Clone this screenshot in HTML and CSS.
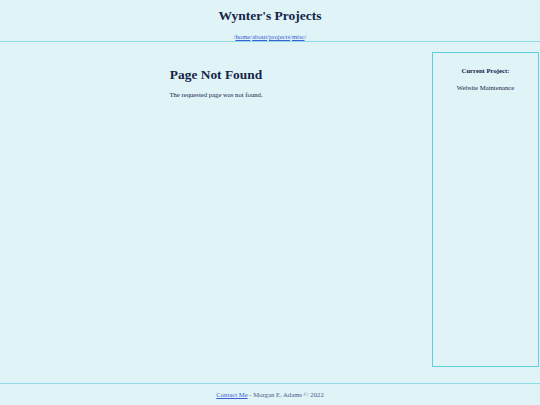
FILE: index.html
```html
<!DOCTYPE html>
<html lang="en">
<head>
<meta charset="utf-8">
<title>Page Not Found - Wynter's Projects</title>
<link rel="stylesheet" href="styles.css">
</head>
<body>
<header class="site-header">
  <h1 class="site-title">Wynter's Projects</h1>
  <nav class="site-nav">/<a href="#">home</a>/<a href="#">about</a>/<a href="#">projects</a>/<a href="#">misc</a>/</nav>
</header>
<div class="layout">
  <main class="content">
    <h2 class="page-title">Page Not Found</h2>
    <p class="page-text">The requested page was not found.</p>
  </main>
  <aside class="sidebar">
    <h3 class="sidebar-title">Current Project:</h3>
    <p class="sidebar-text">Website Maintenance</p>
  </aside>
</div>
<footer class="site-footer">
  <a href="#">Contact Me</a> - Morgan E. Adams &copy; 2022
</footer>
</body>
</html>
```
FILE: styles.css
```css
html, body {
  margin: 0;
  padding: 0;
}
body {
  background: #e0f3f6;
  color: #15254a;
  font-family: "Liberation Serif", "Times New Roman", serif;
  font-size: 6.7px;
  height: 405px;
  display: flex;
  flex-direction: column;
}
a {
  color: #3b5ed6;
}
.site-header {
  text-align: center;
  border-bottom: 1px solid #8fdce7;
  padding-top: 7px;
  height: 34px;
}
.site-title {
  margin: 0;
  font-size: 13.5px;
  line-height: 18px;
}
.site-nav {
  margin-top: 8px;
  line-height: 8px;
  color: #3b5ed6;
}
.layout {
  display: flex;
  flex: 1;
  padding: 10px 1px 16px 0;
}
.content {
  flex: 1;
  text-align: center;
}
.page-title {
  margin: 14px 0 0;
  font-size: 13.4px;
  line-height: 18px;
}
.page-text {
  margin: 6px 0 0;
  line-height: 10px;
}
.sidebar {
  width: 105px;
  border: 1px solid #5fcfdd;
  text-align: center;
}
.sidebar-title {
  margin: 13px 0 0;
  font-size: 6.7px;
  line-height: 10px;
}
.sidebar-text {
  margin: 7px 0 0;
  line-height: 10px;
}
.site-footer {
  border-top: 1px solid #8fdce7;
  text-align: center;
  height: 21px;
  line-height: 21px;
  color: #4a5a8a;
}
```
